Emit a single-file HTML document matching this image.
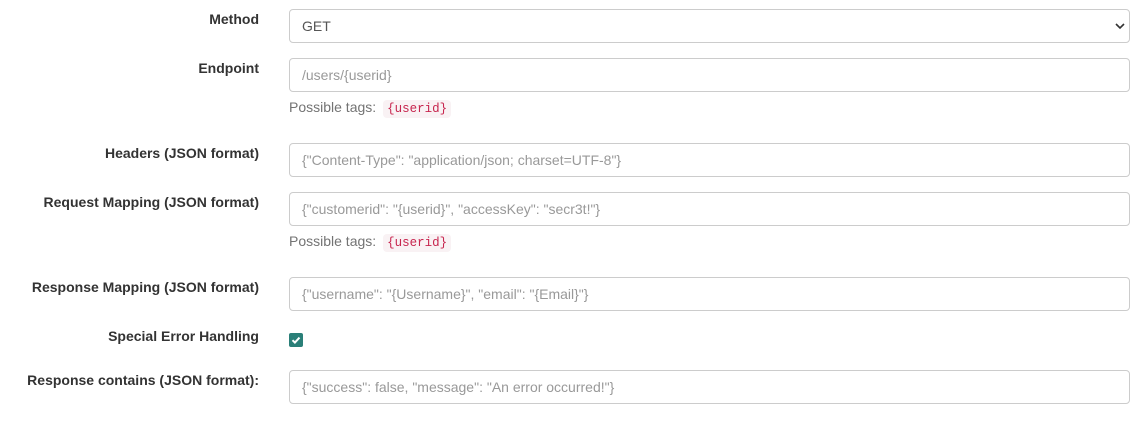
<!DOCTYPE html>
<html><head><style>
body{margin:0;width:1138px;height:424px;background:#fff;font-family:"Liberation Sans",sans-serif;font-size:14px;color:#333;position:relative;overflow:hidden}
.l{position:absolute;right:879px;font-weight:bold;color:#333;white-space:nowrap}
.i{position:absolute;left:289px;width:839px;height:32px;border:1px solid #ccc;border-radius:4px;box-sizing:content-box;color:#999;line-height:32px;padding-left:12px;width:827px}
.h{position:absolute;left:289px;color:#737373}
.h code{font-family:"Liberation Mono",monospace;font-size:12.5px;color:#c7254e;background:#f9f2f4;padding:2px 4px;border-radius:4px;margin-left:3px}
</style></head><body>
<div class="l" style="top:11px">Method</div>
<div class="i" style="top:9px;color:#555">GET<svg style="position:absolute;right:4px;top:12px" width="10" height="8" viewBox="0 0 10 8"><path d="M1 2l4 4 4-4" fill="none" stroke="#333" stroke-width="1.6"/></svg></div>
<div class="l" style="top:60px">Endpoint</div>
<div class="i" style="top:58px">/users/{userid}</div>
<div class="h" style="top:99px">Possible tags: <code>{userid}</code></div>
<div class="l" style="top:145px">Headers (JSON format)</div>
<div class="i" style="top:143px">{"Content-Type": "application/json; charset=UTF-8"}</div>
<div class="l" style="top:194px">Request Mapping (JSON format)</div>
<div class="i" style="top:192px">{"customerid": "{userid}", "accessKey": "secr3t!"}</div>
<div class="h" style="top:233px">Possible tags: <code>{userid}</code></div>
<div class="l" style="top:279px">Response Mapping (JSON format)</div>
<div class="i" style="top:277px">{"username": "{Username}", "email": "{Email}"}</div>
<div class="l" style="top:328px">Special Error Handling</div>
<div style="position:absolute;left:289px;top:333px;width:14px;height:14px;background:#2a7f78;border-radius:2px"><svg width="14" height="14" viewBox="0 0 14 14"><path d="M3.5 7.2l2.4 2.4 4.6-5" fill="none" stroke="#fff" stroke-width="2"/></svg></div>
<div class="l" style="top:372px">Response contains (JSON format):</div>
<div class="i" style="top:370px">{"success": false, "message": "An error occurred!"}</div>
</body></html>
